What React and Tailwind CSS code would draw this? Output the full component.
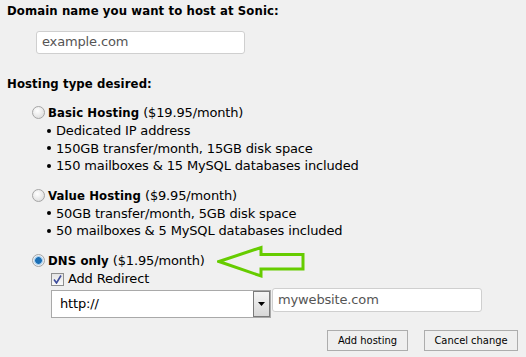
import { useState } from "react";

const Radio = ({ checked }) => (
  <span
    className={`inline-block w-[13px] h-[13px] rounded-full border border-[#a5a5a5] shrink-0 ${
      checked
        ? "bg-[radial-gradient(circle,#1c6fb5_0_3px,#8fc0e6_3.5px,#e8eef4_5px)]"
        : "bg-[radial-gradient(circle_at_40%_35%,#ffffff,#d6d6d6)]"
    }`}
  />
);

const Bullet = ({ children }) => (
  <li className="flex items-center">
    <span className="w-[4px] h-[4px] rounded-full bg-black ml-[1px] mr-[5px]" />
    {children}
  </li>
);

const Plan = ({ name, price, checked, children }) => (
  <div className="mt-[12px]">
    <label className="flex items-center gap-[3px] ml-[31px] h-[18px]">
      <span className="mt-[4px]">
        <Radio checked={checked} />
      </span>
      <span>
        <b className="font-['DejaVu_Sans_Condensed',sans-serif] tracking-[0.1px]">{name}</b> ({price})
      </span>
    </label>
    {children}
  </div>
);

const App = () => {
  const [redirect, setRedirect] = useState(true);

  return (
    <div className="w-[526px] h-[357px] bg-[#f0f0f0] text-black text-[13px] leading-[17.5px] tracking-[-0.15px] font-['DejaVu_Sans',Verdana,sans-serif] relative overflow-hidden">
      <div className="pl-[7px] pt-[2px]">
        <p className="font-bold font-['DejaVu_Sans_Condensed',sans-serif] tracking-[0.1px]">Domain name you want to host at Sonic:</p>
        <div className="ml-[29px] mt-[11px] w-[209px] h-[23px] bg-white border border-[#cfcfcf] rounded-[3px] flex items-center px-[5px] text-[#555]">
          example.com
        </div>
        <p className="font-bold font-['DejaVu_Sans_Condensed',sans-serif] tracking-[0.1px] mt-[21px]">Hosting type desired:</p>
      </div>

      <div className="pl-[1px]">
        <Plan name="Basic Hosting" price="$19.95/month">
          <ul className="ml-[45px]">
            <Bullet>Dedicated IP address</Bullet>
            <Bullet>150GB transfer/month, 15GB disk space</Bullet>
            <Bullet>150 mailboxes &amp; 15 MySQL databases included</Bullet>
          </ul>
        </Plan>
        <Plan name="Value Hosting" price="$9.95/month">
          <ul className="ml-[45px]">
            <Bullet>50GB transfer/month, 5GB disk space</Bullet>
            <Bullet>50 mailboxes &amp; 5 MySQL databases included</Bullet>
          </ul>
        </Plan>
        <Plan name="DNS only" price="$1.95/month" checked>
          <label className="flex items-center gap-[4px] ml-[50px]" onClick={() => setRedirect(!redirect)}>
            <span className="w-[13px] h-[13px] mt-[3px] border border-[#8e8f8f] bg-[linear-gradient(#e4e4e4,#fafafa)] flex items-center justify-center">
              {redirect && (
                <svg width="9" height="9" viewBox="0 0 9 9">
                  <path d="M1 4.5 L3.5 8 L8 0.5" fill="none" stroke="#3d4c9c" strokeWidth="1.6" />
                </svg>
              )}
            </span>
            Add Redirect
          </label>
          <div className="flex items-start ml-[50px] mt-[3px]">
            <div className="w-[220px] h-[28px] bg-white border border-[#a9a9a9] flex items-center">
              <span className="flex-1 pl-[8px]">http://</span>
              <span className="w-[17px] h-[26px] border border-[#7a7a7a] bg-[linear-gradient(#f4f4f4,#d8d8d8)] flex items-center justify-center">
                <svg width="7" height="4" viewBox="0 0 7 4">
                  <path d="M0 0 H7 L3.5 4 Z" fill="#000" />
                </svg>
              </span>
            </div>
            <div className="ml-[1px] -mt-[2px] w-[210px] h-[24px] bg-white border border-[#cfcfcf] rounded-[3px] flex items-center px-[5px] text-[#555]">
              mywebsite.com
            </div>
          </div>
        </Plan>
      </div>

      <div className="flex justify-end gap-[16px] pr-[8px] mt-[12px] text-[11px] tracking-normal font-['DejaVu_Sans_Condensed',Tahoma,sans-serif]">
        <button className="h-[21px] w-[81px] bg-[#efefef] border border-[#adadad]">Add hosting</button>
        <button className="h-[21px] w-[94px] bg-[#efefef] border border-[#adadad]">Cancel change</button>
      </div>

      <svg className="absolute left-[217px] top-[245px]" width="90" height="34" viewBox="0 0 90 34">
        <path
          d="M2 16.5 L44 2.5 L44 9.5 L86 9.5 L86 24 L44 24 L44 31 Z"
          fill="none"
          stroke="#66cc00"
          strokeWidth="3"
          strokeLinejoin="miter"
        />
      </svg>
    </div>
  );
};

export default App;
